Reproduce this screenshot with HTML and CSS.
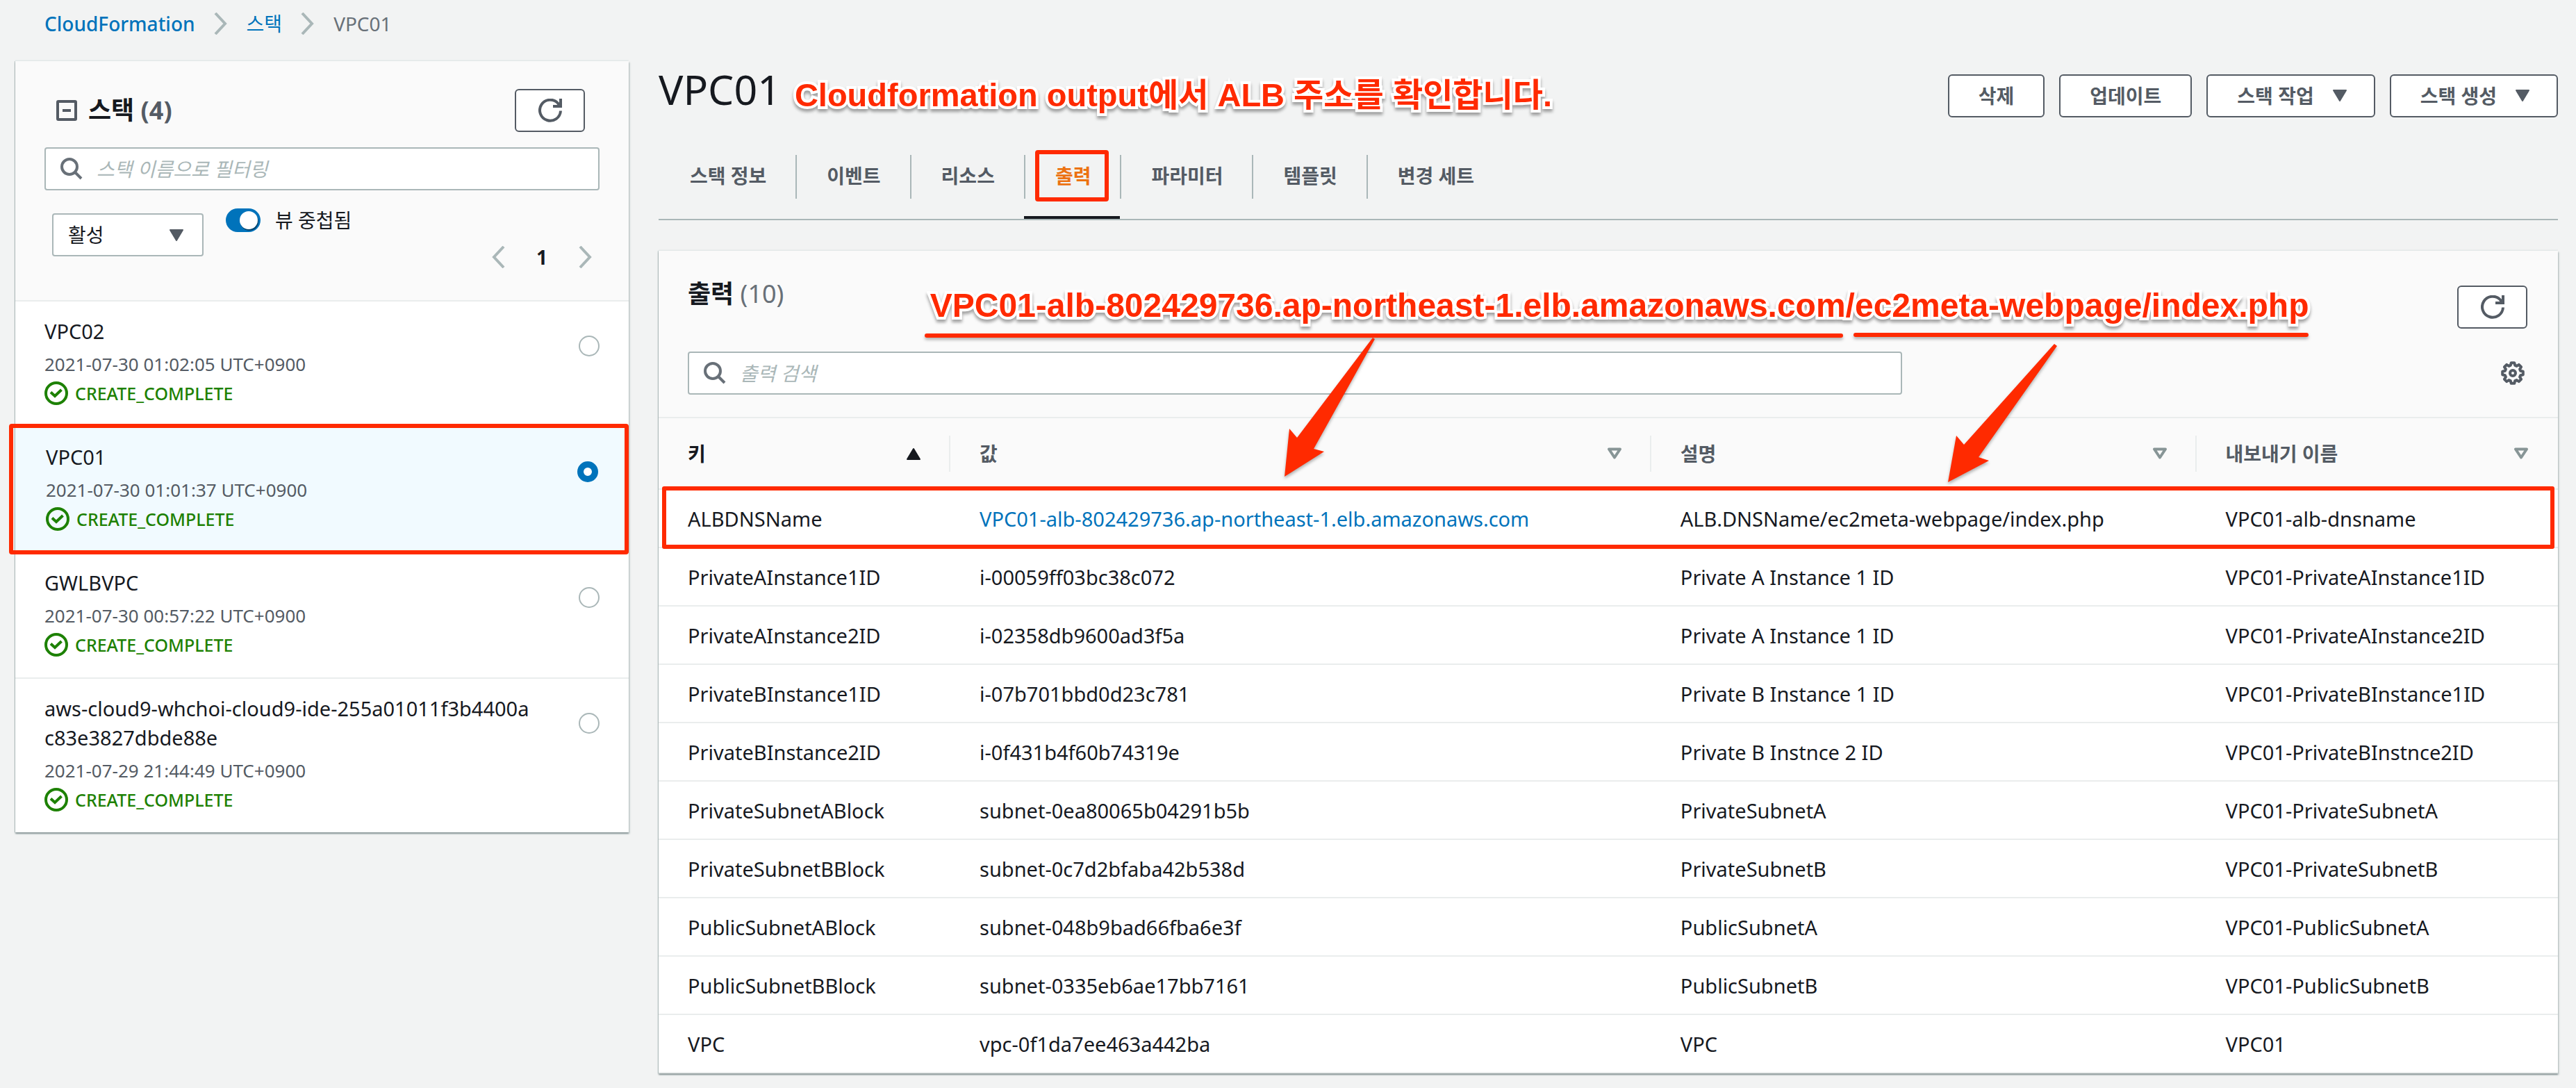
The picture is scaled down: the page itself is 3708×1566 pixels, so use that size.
FILE: index.html
```html
<!DOCTYPE html>
<html lang="ko">
<head>
<meta charset="utf-8">
<title>CloudFormation - VPC01</title>
<link rel="stylesheet" href="styles.css">
</head>
<body>
<svg class="sprite" aria-hidden="true">
  <symbol id="chevron-right" viewBox="0 0 20 32"><path d="M2 1l14 15L2 31" fill="none" stroke="currentColor" stroke-width="4"/></symbol>
  <symbol id="chevron-left" viewBox="0 0 20 32"><path d="M18 1L4 16l14 15" fill="none" stroke="currentColor" stroke-width="4"/></symbol>
  <symbol id="refresh" viewBox="0 0 34 34"><path d="M32 17.500a15 15 0 1 1-4-11L31 10.500" fill="none" stroke="currentColor" stroke-width="4"/><path d="M32 0v11H21" fill="none" stroke="currentColor" stroke-width="4"/></symbol>
  <symbol id="search" viewBox="0 0 32 32"><circle cx="13" cy="13" r="11" fill="none" stroke="currentColor" stroke-width="4"/><path d="M20 20l10 10" fill="none" stroke="currentColor" stroke-width="4"/></symbol>
  <symbol id="check" viewBox="0 0 34 34"><circle cx="17" cy="17" r="15" fill="none" stroke="currentColor" stroke-width="4"/><path d="M9 15.500l6 5.500 9.500-9" fill="none" stroke="currentColor" stroke-width="4"/></symbol>
  <symbol id="down" viewBox="0 0 22 18"><path d="M2 1h18L11 16z" fill="currentColor" stroke="currentColor" stroke-width="2" stroke-linejoin="round"/></symbol>
  <symbol id="up" viewBox="0 0 22 18"><path d="M2 17h18L11 2z" fill="currentColor" stroke="currentColor" stroke-width="2" stroke-linejoin="round"/></symbol>
  <symbol id="down-open" viewBox="0 0 22 18"><path d="M3 2.500h16L11 14.500z" fill="none" stroke="currentColor" stroke-width="4" stroke-linejoin="round"/></symbol>
  <symbol id="gear" viewBox="0 0 34 34"><path d="M13.800 5.900L14.700 2.200H19.300L20.200 5.900L22.600 6.900L25.800 4.900L29.100 8.200L27.100 11.400L28.100 13.800L31.800 14.700V19.300L28.100 20.200L27.100 22.600L29.100 25.800L25.800 29.100L22.600 27.100L20.200 28.100L19.300 31.800H14.700L13.800 28.100L11.400 27.100L8.200 29.100L4.900 25.800L6.900 22.600L5.900 20.200L2.200 19.300V14.700L5.900 13.800L6.900 11.400L4.900 8.200L8.200 4.900L11.400 6.900Z" fill="none" stroke="currentColor" stroke-width="4" stroke-linejoin="round"/><circle cx="17" cy="17" r="4" fill="none" stroke="currentColor" stroke-width="4"/></symbol>
</svg>

<nav class="crumbs" aria-label="breadcrumb">
  <a href="#" class="strong">CloudFormation</a>
  <svg class="chev"><use href="#chevron-right"/></svg>
  <a href="#">스택</a>
  <svg class="chev"><use href="#chevron-right"/></svg>
  <span>VPC01</span>
</nav>

<div class="layout">
  <aside class="panel">
    <div class="side-head">
      <div class="side-title">
        <button class="collapse" aria-label="접기"></button>
        <h2>스택 <span>(4)</span></h2>
        <button class="btn icon-btn" aria-label="새로 고침"><svg><use href="#refresh"/></svg></button>
      </div>
      <label class="search"><svg><use href="#search"/></svg><input type="text" placeholder="스택 이름으로 필터링" aria-label="스택 이름으로 필터링"></label>
      <div class="filters">
        <div class="select-wrap"><select aria-label="상태"><option>활성</option></select><svg><use href="#down"/></svg></div>
        <label class="toggle"><input type="checkbox" checked><span>뷰 중첩됨</span></label>
        <div class="pager">
          <button aria-label="이전"><svg class="chev"><use href="#chevron-left"/></svg></button>
          <b>1</b>
          <button aria-label="다음"><svg class="chev"><use href="#chevron-right"/></svg></button>
        </div>
      </div>
    </div>
    <div class="stacks">
      <label class="stack">
        <span class="info"><span class="name">VPC02</span><span class="date">2021-07-30 01:02:05 UTC+0900</span><span class="status"><svg><use href="#check"/></svg>CREATE_COMPLETE</span></span>
        <input type="radio" name="stack">
      </label>
      <label class="stack selected">
        <span class="info"><span class="name">VPC01</span><span class="date">2021-07-30 01:01:37 UTC+0900</span><span class="status"><svg><use href="#check"/></svg>CREATE_COMPLETE</span></span>
        <input type="radio" name="stack" checked>
      </label>
      <label class="stack">
        <span class="info"><span class="name">GWLBVPC</span><span class="date">2021-07-30 00:57:22 UTC+0900</span><span class="status"><svg><use href="#check"/></svg>CREATE_COMPLETE</span></span>
        <input type="radio" name="stack">
      </label>
      <label class="stack">
        <span class="info"><span class="name">aws-cloud9-whchoi-cloud9-ide-255a01011f3b4400a<wbr>c83e3827dbde88e</span><span class="date">2021-07-29 21:44:49 UTC+0900</span><span class="status"><svg><use href="#check"/></svg>CREATE_COMPLETE</span></span>
        <input type="radio" name="stack">
      </label>
    </div>
  </aside>

  <main>
    <header class="page-head">
      <h1>VPC01</h1>
      <p class="note">Cloudformation output에서 ALB 주소를 확인합니다.</p>
      <div class="actions">
        <button class="btn">삭제</button>
        <button class="btn">업데이트</button>
        <button class="btn">스택 작업<svg><use href="#down"/></svg></button>
        <button class="btn">스택 생성<svg><use href="#down"/></svg></button>
      </div>
    </header>
    <nav class="tabs">
      <a href="#">스택 정보</a><a href="#">이벤트</a><a href="#">리소스</a><a href="#" class="active">출력</a><a href="#">파라미터</a><a href="#">템플릿</a><a href="#">변경 세트</a>
    </nav>

    <section class="panel outputs">
      <div class="out-head">
        <div class="out-title">
          <h2>출력 <span>(10)</span></h2>
          <button class="btn icon-btn" aria-label="새로 고침"><svg><use href="#refresh"/></svg></button>
        </div>
        <div class="out-tools">
          <label class="search"><svg><use href="#search"/></svg><input type="text" placeholder="출력 검색" aria-label="출력 검색"></label>
          <button class="gear" aria-label="기본 설정"><svg><use href="#gear"/></svg></button>
        </div>
      </div>
      <table>
        <colgroup><col class="c-key"><col class="c-value"><col class="c-desc"><col></colgroup>
        <thead><tr>
          <th class="sorted"><div>키<svg><use href="#up"/></svg></div></th>
          <th><div>값<svg><use href="#down-open"/></svg></div></th>
          <th><div>설명<svg><use href="#down-open"/></svg></div></th>
          <th><div>내보내기 이름<svg><use href="#down-open"/></svg></div></th>
        </tr></thead>
        <tbody>
          <tr class="marked"><td>ALBDNSName</td><td><a href="#">VPC01-alb-802429736.ap-northeast-1.elb.amazonaws.com</a></td><td>ALB.DNSName/ec2meta-webpage/index.php</td><td>VPC01-alb-dnsname</td></tr>
          <tr><td>PrivateAInstance1ID</td><td>i-00059ff03bc38c072</td><td>Private A Instance 1 ID</td><td>VPC01-PrivateAInstance1ID</td></tr>
          <tr><td>PrivateAInstance2ID</td><td>i-02358db9600ad3f5a</td><td>Private A Instance 1 ID</td><td>VPC01-PrivateAInstance2ID</td></tr>
          <tr><td>PrivateBInstance1ID</td><td>i-07b701bbd0d23c781</td><td>Private B Instance 1 ID</td><td>VPC01-PrivateBInstance1ID</td></tr>
          <tr><td>PrivateBInstance2ID</td><td>i-0f431b4f60b74319e</td><td>Private B Instnce 2 ID</td><td>VPC01-PrivateBInstnce2ID</td></tr>
          <tr><td>PrivateSubnetABlock</td><td>subnet-0ea80065b04291b5b</td><td>PrivateSubnetA</td><td>VPC01-PrivateSubnetA</td></tr>
          <tr><td>PrivateSubnetBBlock</td><td>subnet-0c7d2bfaba42b538d</td><td>PrivateSubnetB</td><td>VPC01-PrivateSubnetB</td></tr>
          <tr><td>PublicSubnetABlock</td><td>subnet-048b9bad66fba6e3f</td><td>PublicSubnetA</td><td>VPC01-PublicSubnetA</td></tr>
          <tr><td>PublicSubnetBBlock</td><td>subnet-0335eb6ae17bb7161</td><td>PublicSubnetB</td><td>VPC01-PublicSubnetB</td></tr>
          <tr><td>VPC</td><td>vpc-0f1da7ee463a442ba</td><td>VPC</td><td>VPC01</td></tr>
        </tbody>
      </table>
      <div class="callout">
        <p class="note">VPC01-alb-802429736.ap-northeast-1.elb.amazonaws.com/ec2meta-webpage/index.php</p>
        <svg class="arrows" viewBox="0 0 2000 230" aria-hidden="true">
          <path d="M3 9H1319M1340 8H1989" fill="none" stroke="#ff2a00" stroke-width="6" stroke-linecap="round"/>
          <path d="M648 14L560 172L575 176L518 212L525 143L536 156L645 12ZM1630 24L1517 184L1532 189L1473 220L1485 153L1496 166L1626 21Z" fill="#ff2a00"/>
        </svg>
      </div>
    </section>
  </main>
</div>
</body>
</html>
```
FILE: styles.css
```css
* { box-sizing: border-box; }

body {
  margin: 0;
  padding: 0 26px 20px 22px;
  background: #f2f3f3;
  color: #16191f;
  font: 28px/42px "Noto Sans", "Noto Sans CJK KR", sans-serif;
}

h1, h2, p { margin: 0; }
a { color: #0073bb; text-decoration: none; }
button, input, select { font: inherit; color: inherit; }
button { padding: 0; border: 0; background: none; }
svg { display: block; flex: none; }
.sprite { position: absolute; width: 0; height: 0; }

.crumbs {
  display: flex;
  align-items: center;
  gap: 27px;
  height: 68px;
  padding-left: 42px;
  margin-bottom: 20px;
  color: #687078;
}
.crumbs .strong { font-weight: 500; }
.chev { width: 20px; height: 32px; color: #aab7b8; }

.layout {
  display: grid;
  grid-template-columns: 883fr 2734fr;
  gap: 43px;
  align-items: start;
}

.panel {
  position: relative;
  background: #fff;
  box-shadow: 0 2px 2px #879596, 2px 2px 2px #d5dbdb, -1px 0 1px #c5cdcd, 0 -2px 0 #eaeded;
}

.btn {
  display: flex;
  align-items: center;
  gap: 26px;
  height: 62px;
  padding: 0 42px;
  border: 2px solid #545b64;
  border-radius: 6px;
  background: #fff;
  color: #545b64;
  font-weight: 700;
}
.btn svg { width: 22px; height: 18px; }
.icon-btn { justify-content: center; width: 101px; padding: 0; }
.icon-btn svg { width: 34px; height: 34px; }

.search {
  display: flex;
  align-items: center;
  gap: 20px;
  height: 62px;
  padding: 0 21px;
  border: 2px solid #aab7b8;
  border-radius: 4px;
  background: #fff;
}
.search svg { width: 32px; height: 32px; color: #687078; }
.search input { flex: 1; min-width: 0; padding: 0; border: 0; outline: 0; background: none; }
.search input::placeholder { color: #aab7b8; font-style: italic; opacity: 1; }

/* Stack list */
.side-head {
  padding: 40px 42px 0;
  height: 346px;
  background: #fafafa;
  border-bottom: 2px solid #eaeded;
}
.side-title { display: flex; align-items: center; padding: 0 21px 0 17px; margin-bottom: 22px; }
.collapse {
  display: grid;
  place-items: center;
  width: 30px;
  height: 30px;
  margin-right: 16px;
  border: 4px solid #545b64;
  border-radius: 3px;
}
.collapse::before { content: ""; width: 12px; height: 4px; background: #545b64; }
h2 { font-size: 36px; font-weight: 700; line-height: 44px; }
.side-title h2 { flex: 1; }
.side-title h2 span { color: #545b64; }

.filters { display: flex; align-items: flex-start; padding-left: 11px; margin-top: 33px; }
.select-wrap { position: relative; width: 218px; margin-right: 32px; }
.select-wrap select {
  width: 100%;
  height: 62px;
  padding: 0 21px;
  appearance: none;
  border: 2px solid #aab7b8;
  border-radius: 4px;
  background: #fff;
}
.select-wrap svg { position: absolute; right: 28px; top: 23px; width: 22px; height: 18px; color: #545b64; }
.toggle { display: flex; align-items: center; gap: 21px; height: 42px; margin-top: -11px; }
.toggle input {
  position: relative;
  width: 50px;
  height: 34px;
  margin: 0;
  appearance: none;
  border-radius: 17px;
  background: #0073bb;
}
.toggle input::after {
  content: "";
  position: absolute;
  right: 4px;
  top: 4px;
  width: 26px;
  height: 26px;
  border-radius: 50%;
  background: #fff;
  box-shadow: 1px 2px 0 #00456f;
}
.pager { display: flex; align-items: center; gap: 45px; margin: 42px 10px 0 auto; }

.stack {
  position: relative;
  display: flex;
  align-items: flex-start;
  justify-content: space-between;
  gap: 40px;
  padding: 22px 42px 26px;
  border-bottom: 2px solid #eaeded;
}
.stack:last-child { border-bottom: 0; }
.info { display: flex; flex-direction: column; min-width: 0; }
.name { font-size: 29px; }
.date { margin-top: 5px; font-size: 26px; color: #545b64; }
.status { display: flex; align-items: center; gap: 10px; font-size: 25px; font-weight: 500; color: #1d8102; }
.status svg { width: 34px; height: 34px; }
.stack input {
  flex: none;
  width: 30px;
  height: 30px;
  margin: 27px 0 0;
  appearance: none;
  border: 2px solid #aab7b8;
  border-radius: 50%;
  background: #fff;
}
.stack input:checked { border: 9px solid #0073bb; }
.selected { padding-left: 44px; padding-right: 44px; background: #f1faff; }
.selected::after {
  content: "";
  position: absolute;
  inset: -5px 0 -4px -9px;
  border: 6px solid #ff2a00;
  border-radius: 4px;
}

/* Stack details */
.page-head { display: flex; align-items: flex-start; padding-top: 19px; }
h1 { margin-top: -7px; font-size: 59px; font-weight: 400; line-height: 56px; }
.note {
  color: #ff2a00;
  font: 700 48px/56px "Liberation Sans", "Noto Sans CJK KR", sans-serif;
  white-space: nowrap;
  paint-order: stroke fill;
  -webkit-text-stroke: 8px #fff;
  filter: drop-shadow(0 4px 2px rgba(0, 0, 0, .35));
}
.page-head .note { margin: 2px 0 0 20px; font-size: 47px; }
.actions { display: flex; gap: 21px; margin-left: auto; }
.actions svg { margin-right: -4px; }

.tabs { display: flex; height: 148px; border-bottom: 2px solid #aab7b8; margin-bottom: 44px; }
.tabs a {
  position: relative;
  padding: 63px 42px 0 45px;
  color: #545b64;
  font-weight: 700;
}
.tabs a + a::before {
  content: "";
  position: absolute;
  left: 0;
  top: 54px;
  width: 2px;
  height: 63px;
  background: #aab7b8;
}
.tabs .active { color: #ec7211; border-bottom: 4px solid #16191f; }
.tabs .active::after {
  content: "";
  position: absolute;
  inset: 47px 16px 21px;
  border: 6px solid #ff2a00;
  border-radius: 4px;
}

.out-head { padding: 40px 44px 32px 42px; background: #fafafa; border-bottom: 2px solid #eaeded; }
.out-title, .out-tools { display: flex; justify-content: space-between; }
.out-title { align-items: flex-start; }
.out-title h2 span { color: #687078; font-weight: 400; }
.out-title .btn { margin-top: 10px; }
.out-tools { align-items: center; margin-top: 33px; }
.out-tools .search { width: 66%; }
.gear { margin-right: 4px; color: #545b64; }
.gear svg { width: 34px; height: 34px; }

table { width: 100%; border-collapse: collapse; table-layout: fixed; text-align: left; }
.c-key { width: 420px; }
.c-value { width: 36.9%; }
.c-desc { width: 28.7%; }
th { height: 102px; padding: 0 42px; background: #fafafa; border-bottom: 2px solid #eaeded; color: #545b64; }
th div { display: flex; align-items: center; justify-content: space-between; height: 52px; }
th svg { width: 22px; height: 18px; color: #879596; }
th:not(:last-child) div { margin-right: -42px; padding-right: 40px; border-right: 2px solid #eaeded; }
th.sorted, .sorted svg { color: #16191f; }
td { height: 84px; padding: 2px 42px 0; border-bottom: 2px solid #eaeded; font-size: 29px; }
.marked { position: relative; }
.marked td:first-child::after {
  content: "";
  position: absolute;
  inset: -4px 5px -2px;
  border: 6px solid #ff2a00;
  border-radius: 3px;
}

.callout { position: absolute; left: 14%; top: 51px; width: 2000px; pointer-events: none; }
.callout .note { padding-left: 8px; }
.arrows { width: 2000px; height: 230px; margin-top: 6px; filter: drop-shadow(0 3px 2px rgba(0, 0, 0, .3)); }
```
